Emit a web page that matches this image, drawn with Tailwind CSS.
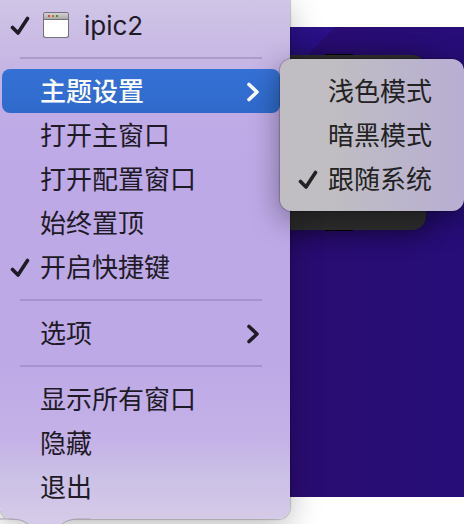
<!DOCTYPE html>
<html lang="zh-CN">
<head>
<meta charset="utf-8">
<meta name="viewport" content="width=device-width, initial-scale=1">
<title>ipic2</title>
<script src="https://cdn.jsdelivr.net/npm/@tailwindcss/browser@4"></script>
</head>
<body class="bg-white font-[Inter,'Noto_Sans_CJK_SC',sans-serif] text-[26px] leading-8 text-[#1e1a26]">
<svg class="hidden" aria-hidden="true">
  <symbol id="check" viewBox="0 0 20 20"><path d="M2.5 11.5 8 17 17.5 2.5" fill="none" stroke="currentColor" stroke-width="3.6" stroke-linecap="round" stroke-linejoin="round"/></symbol>
  <symbol id="chevron" viewBox="0 0 14 20"><path d="M3 2.5 11 10 3 17.5" fill="none" stroke="currentColor" stroke-width="3.6" stroke-linecap="round" stroke-linejoin="round"/></symbol>
</svg>
<main class="relative min-h-screen overflow-hidden">
  <!-- Wallpaper and the dark window behind the menus -->
  <div class="absolute inset-x-0 top-[27px] bottom-[27px] overflow-hidden bg-linear-to-r from-[#2a0c70] from-60% to-[#260d78]">
    <svg class="absolute top-0 left-[290px]" width="60" height="36" aria-hidden="true"><path d="M0 0H45L10 36H0Z" fill="#2a1187"/></svg>
    <div class="absolute top-[28px] left-0 h-[175px] w-[426px] rounded-[14px] bg-[#2e2e2e] shadow-[0_4px_24px_#0006]"></div>
    <div class="absolute top-[203px] left-[325px] h-px w-7 rounded-full bg-black"></div>
    <div class="absolute top-[27px] left-[325px] h-px w-7 rounded-full bg-black"></div>
  </div>

  <nav aria-label="ipic2" class="relative w-5/8 rounded-b-xl bg-[linear-gradient(to_bottom,#d0c5e6,#c6b6e4_12%,#bfabe6_22%,#bda9e6_35%,#bda9e6_70%,#c5b2e7_85%,#cabfe6_91%,#d5cae7)] pt-[3px] pb-2.5 shadow-[0_0_1px_1px_#0003,0_8px_32px_#0004]">
    <ul>
      <li class="pr-2.5 pl-0.5">
        <button type="button" class="flex h-11 w-full items-center pt-0.5">
          <span class="flex w-[38px] shrink-0 pl-2"><svg class="size-5" aria-hidden="true"><use href="#check"/></svg></span>
          <svg class="mr-3.5 size-[30px] shrink-0" viewBox="0 0 30 30" aria-hidden="true">
            <defs><linearGradient id="bar" x2="0" y2="1"><stop stop-color="#d2d2d2"/><stop offset="1" stop-color="#a9a9a9"/></linearGradient></defs>
            <rect x="3" y="1" width="26" height="26" rx="2.5" fill="#77717f"/>
            <rect x="4" y="2" width="24" height="24" rx="2" fill="#fff"/>
            <path d="M4 8V4a2 2 0 0 1 2-2H26a2 2 0 0 1 2 2V8Z" fill="url(#bar)"/>
            <path d="M4 8.5H28" stroke="#737373"/>
            <path d="M8 4h2v2H8Z" fill="#e04848"/><path d="M12 4h2v2h-2Z" fill="#bd7626"/><path d="M16 4h2v2h-2Z" fill="#56852b"/>
          </svg>
          <span>ipic2</span>
        </button>
      </li>
      <li class="flex h-[22px] items-center pr-7 pl-5" role="separator"><span class="h-0.5 w-full bg-[#ac9bcd]"></span></li>
      <li class="relative pr-2.5 pl-0.5">
        <button type="button" aria-haspopup="true" aria-expanded="true" class="flex h-11 w-full items-center justify-between rounded-lg bg-linear-to-b from-[#3571d5] to-[#2f6acb] pt-0.5 pr-5 pl-[38px] font-medium text-white">
          <span>主题设置</span><svg class="h-5 w-3.5" aria-hidden="true"><use href="#chevron"/></svg>
        </button>
        <ul aria-label="主题设置" class="absolute -top-2.5 left-[280px] w-[184px] rounded-xl bg-linear-to-r from-[#c0bdc3] from-30% to-[#b8aed3] py-2.5 text-[#222] shadow-[0_0_1px_1px_#0003,0_8px_30px_#0006]">
          <li><button type="button" class="flex h-11 w-full items-center pt-0.5 pl-12">浅色模式</button></li>
          <li><button type="button" class="flex h-11 w-full items-center pt-0.5 pl-12">暗黑模式</button></li>
          <li><button type="button" class="flex h-11 w-full items-center pt-0.5"><span class="flex w-12 shrink-0 pl-[18px]"><svg class="size-5" aria-hidden="true"><use href="#check"/></svg></span>跟随系统</button></li>
        </ul>
      </li>
      <li class="pr-2.5 pl-0.5"><button type="button" class="flex h-11 w-full items-center pt-0.5 pl-[38px]">打开主窗口</button></li>
      <li class="pr-2.5 pl-0.5"><button type="button" class="flex h-11 w-full items-center pt-0.5 pl-[38px]">打开配置窗口</button></li>
      <li class="pr-2.5 pl-0.5"><button type="button" class="flex h-11 w-full items-center pt-0.5 pl-[38px]">始终置顶</button></li>
      <li class="pr-2.5 pl-0.5"><button type="button" class="flex h-11 w-full items-center pt-0.5"><span class="flex w-[38px] shrink-0 pl-2"><svg class="size-5" aria-hidden="true"><use href="#check"/></svg></span>开启快捷键</button></li>
      <li class="flex h-[22px] items-center pr-7 pl-5" role="separator"><span class="h-0.5 w-full bg-[#a692cd]"></span></li>
      <li class="pr-2.5 pl-0.5">
        <button type="button" aria-haspopup="true" class="flex h-11 w-full items-center justify-between pt-0.5 pr-5 pl-[38px]">
          <span>选项</span><svg class="h-5 w-3.5" aria-hidden="true"><use href="#chevron"/></svg>
        </button>
      </li>
      <li class="flex h-[22px] items-center pr-7 pl-5" role="separator"><span class="h-0.5 w-full bg-[#a692cd]"></span></li>
      <li class="pr-2.5 pl-0.5"><button type="button" class="flex h-11 w-full items-center pt-0.5 pl-[38px]">显示所有窗口</button></li>
      <li class="pr-2.5 pl-0.5"><button type="button" class="flex h-11 w-full items-center pt-0.5 pl-[38px]">隐藏</button></li>
      <li class="pr-2.5 pl-0.5"><button type="button" class="flex h-11 w-full items-center pt-0.5 pl-[38px]">退出</button></li>
    </ul>
    <!-- Pointer towards the dock -->
    <svg class="absolute top-full left-0 -mt-px" width="90" height="6" aria-hidden="true"><path d="M0 0H90V1H78C71 1 66 3 62 6H28C24 3 19 1 12 1H0Z" fill="#d5cae7"/><path d="M0 1H12C19 1 24 3 28 6M62 6C66 3 71 1 78 1H90" fill="none" stroke="#a8a2b0"/></svg>
  </nav>
</main>
</body>
</html>
